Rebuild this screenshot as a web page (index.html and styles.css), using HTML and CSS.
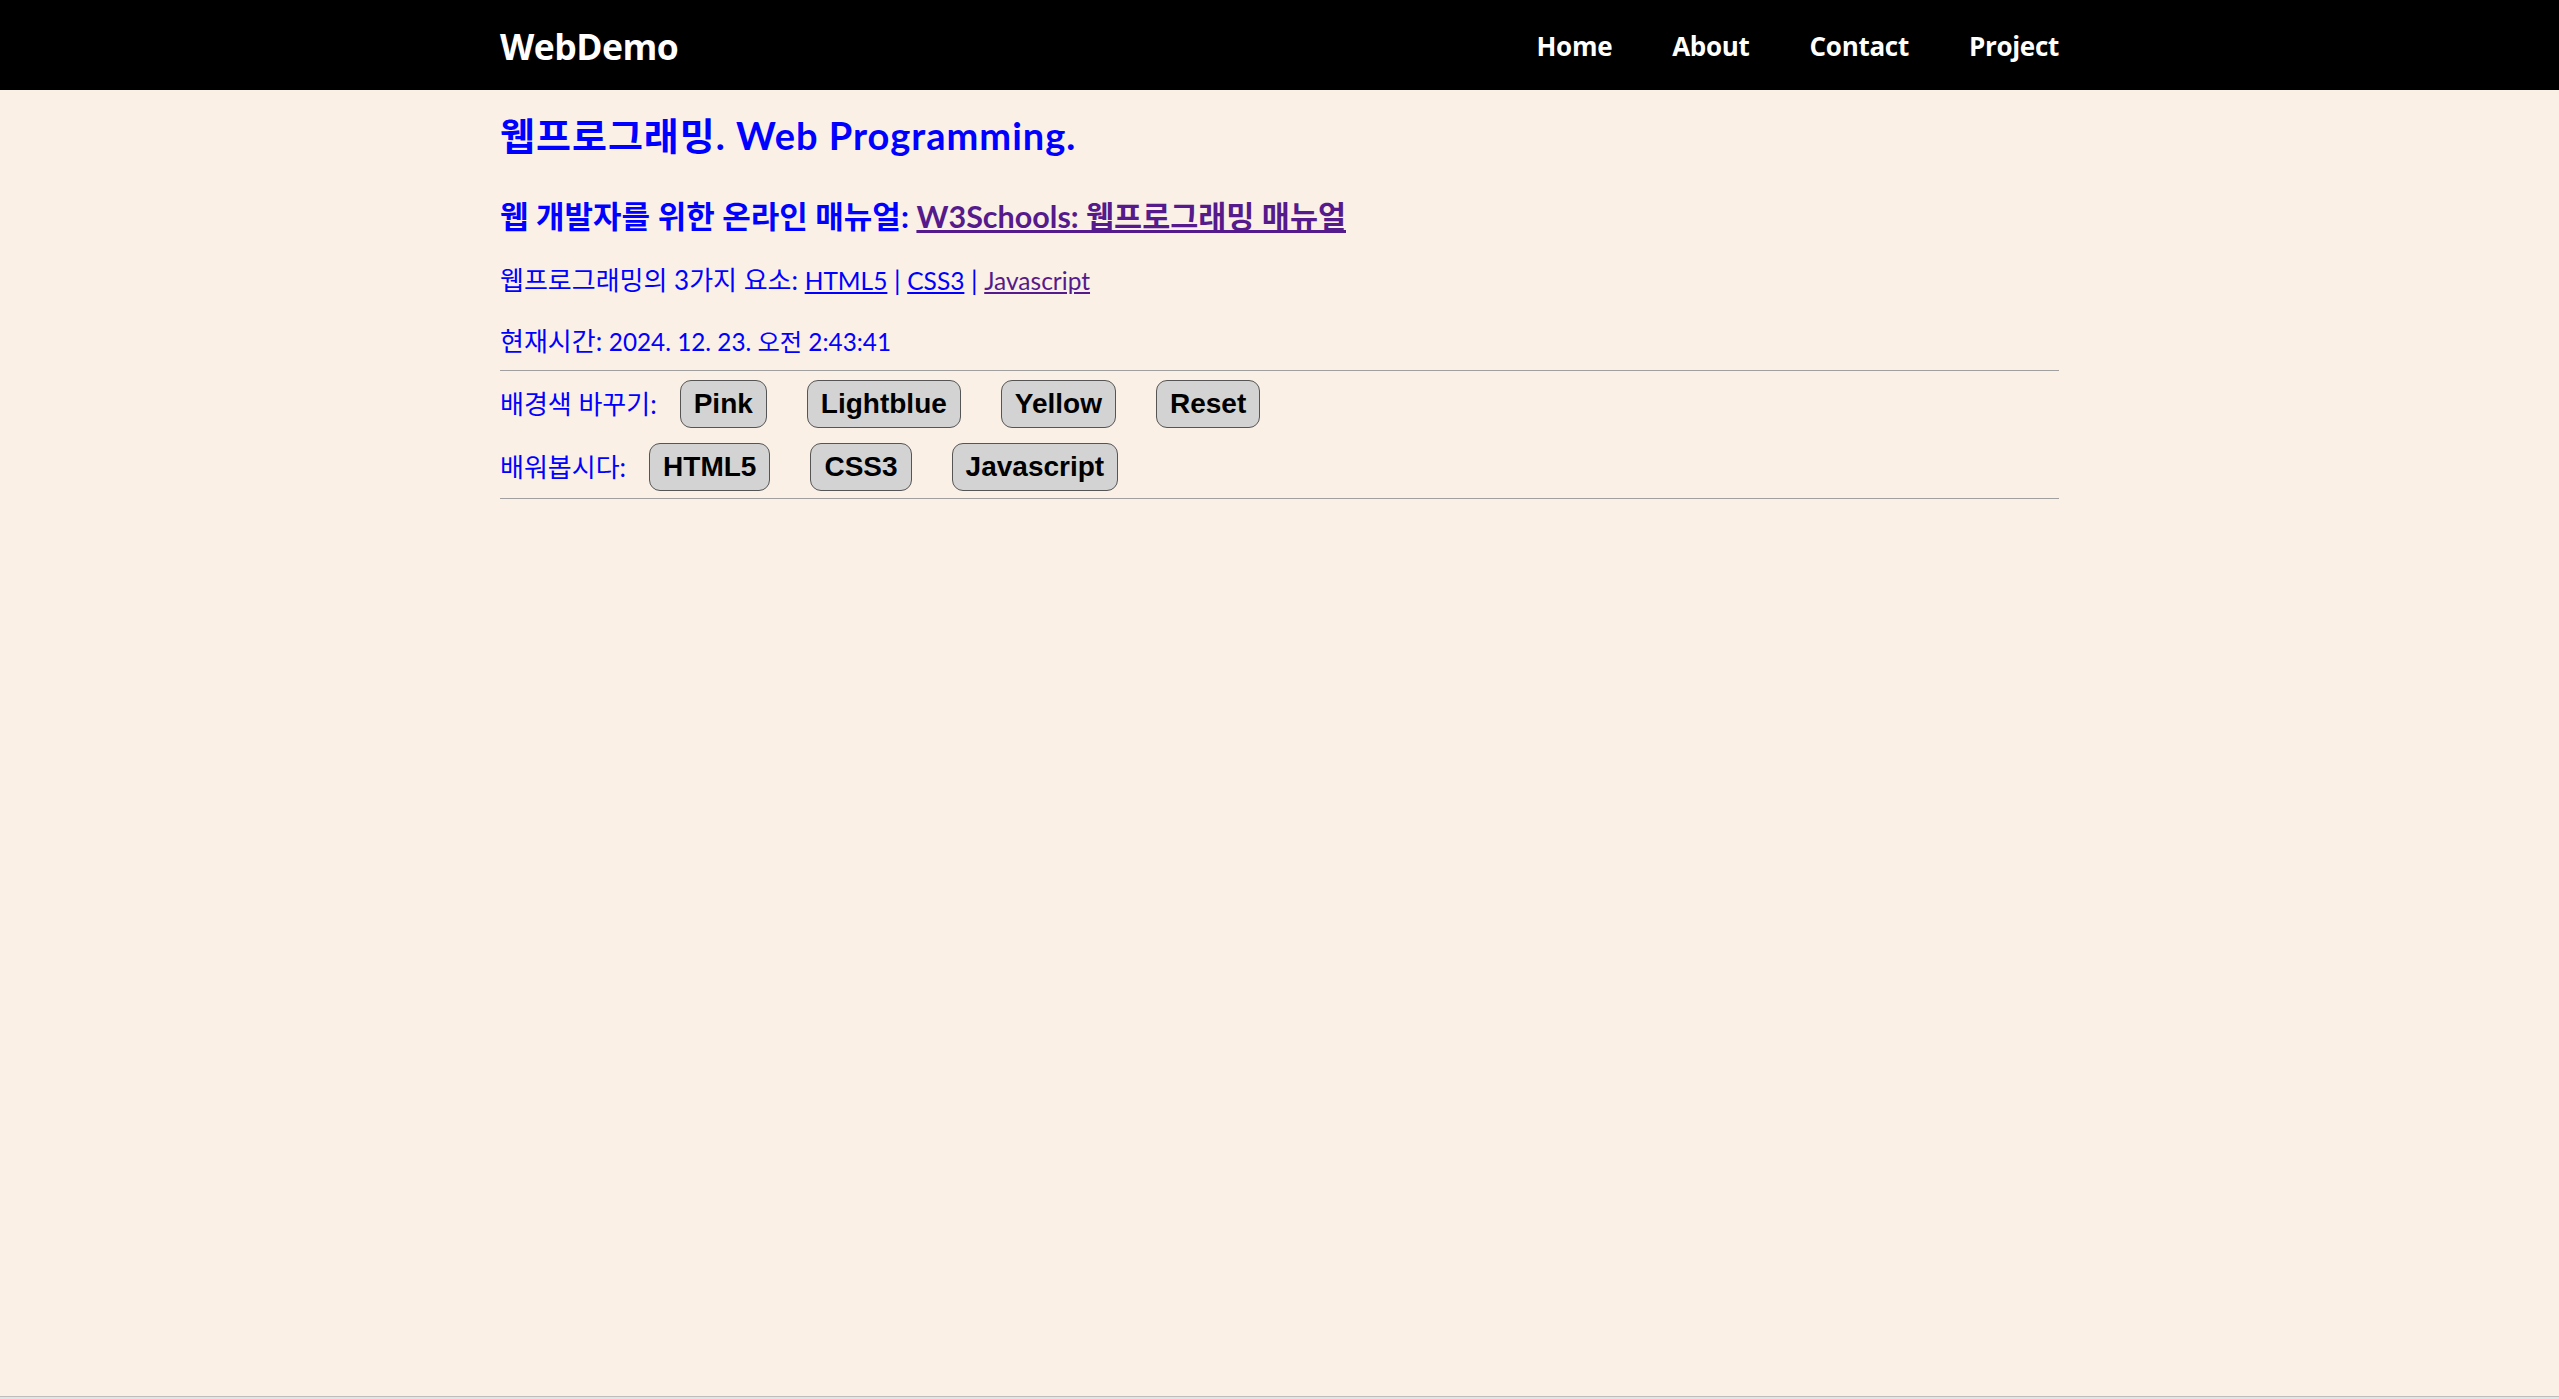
FILE: index.html
```html
<!DOCTYPE html>
<html lang="ko">
<head>
<meta charset="utf-8">
<title>WebDemo</title>
<link rel="stylesheet" href="styles.css">
</head>
<body>
<div class="page">
  <header class="topbar">
    <div class="wrap topbar-inner">
      <div class="logo">WebDemo</div>
      <nav class="nav">
        <a href="#" class="nav-link">Home</a>
        <a href="#" class="nav-link">About</a>
        <a href="#" class="nav-link">Contact</a>
        <a href="#" class="nav-link">Project</a>
      </nav>
    </div>
  </header>
  <main class="wrap content">
    <h1 class="title">웹프로그래밍. Web Programming.</h1>
    <h2 class="subtitle">웹 개발자를 위한 온라인 매뉴얼: <a href="#" class="visited">W3Schools: 웹프로그래밍 매뉴얼</a></h2>
    <p class="text">웹프로그래밍의 3가지 요소: <a href="#" class="link">HTML5</a> | <a href="#" class="link">CSS3</a> | <a href="#" class="visited">Javascript</a></p>
    <p class="text time">현재시간: <span class="clock">2024. 12. 23. 오전 2:43:41</span></p>
    <hr class="rule first">
    <div class="row">
      <span class="label">배경색 바꾸기:</span>
      <button class="btn">Pink</button>
      <button class="btn">Lightblue</button>
      <button class="btn">Yellow</button>
      <button class="btn">Reset</button>
    </div>
    <div class="row second">
      <span class="label">배워봅시다:</span>
      <button class="btn">HTML5</button>
      <button class="btn">CSS3</button>
      <button class="btn">Javascript</button>
    </div>
    <hr class="rule last">
  </main>
  <footer class="footer"></footer>
</div>
</body>
</html>
```

FILE: styles.css
```css
html, body {
  margin: 0;
  padding: 0;
}
body {
  background: #faf0e6;
  font-family: Lato, "Noto Sans CJK KR", sans-serif;
  color: #0000ff;
}
.page {
  min-height: 100vh;
  display: flex;
  flex-direction: column;
}
.wrap {
  width: 1559px;
  margin: 0 auto;
}
.topbar {
  background: #000;
  height: 90px;
}
.topbar-inner {
  height: 90px;
  display: flex;
  align-items: center;
  justify-content: space-between;
}
.logo {
  font-family: "Open Sans", "Noto Sans CJK KR", sans-serif;
  color: #fff;
  font-weight: 700;
  font-size: 35.5px;
  line-height: 40px;
  letter-spacing: -0.5px;
  margin-top: 2px;
}
.nav {
  display: flex;
  gap: 60px;
  margin-top: 2px;
}
.nav-link {
  font-family: "Open Sans", "Noto Sans CJK KR", sans-serif;
  color: #fff;
  text-decoration: none;
  font-weight: 700;
  font-size: 26px;
  line-height: 30px;
  letter-spacing: -0.3px;
}
.content {
  flex: 1;
}
.title {
  margin: 20px 0 0;
  font-size: 38px;
  line-height: 50px;
  font-weight: 700;
  letter-spacing: 1px;
}
.subtitle {
  margin: 36px 0 0;
  font-size: 31px;
  line-height: 40px;
  font-weight: 700;
}
.subtitle .visited {
  font-size: 30.5px;
  line-height: 1;
}
.text {
  margin: 27px 0 0;
  font-size: 26px;
  line-height: 34px;
}
.text a {
  font-size: 24.5px;
  line-height: 1;
}
.clock {
  font-size: 24.3px;
  line-height: 1;
}
.link {
  color: #0000ff;
}
.visited {
  color: #551a8b;
}
.rule {
  border: none;
  border-top: 1px solid #a0a0a0;
  height: 0;
  margin: 0;
}
.rule.first {
  margin-top: 12px;
}
.rule.last {
  margin-top: 7px;
}
.row {
  display: flex;
  align-items: center;
  margin-top: 9px;
}
.row.second {
  margin-top: 15px;
}
.label {
  font-size: 26px;
  line-height: 34px;
  margin-right: 23px;
}
.btn {
  font-family: "Liberation Sans", Arial, sans-serif;
  font-weight: 700;
  font-size: 28px;
  line-height: 32px;
  color: #000;
  background: #d3d3d3;
  border: 1px solid #555;
  border-radius: 11px;
  padding: 7px 13px;
  margin: 0 40px 0 0;
}
.footer {
  height: 2px;
  border-top: 1px solid #bdbdbd;
  background: #e4e4e4;
}
```
